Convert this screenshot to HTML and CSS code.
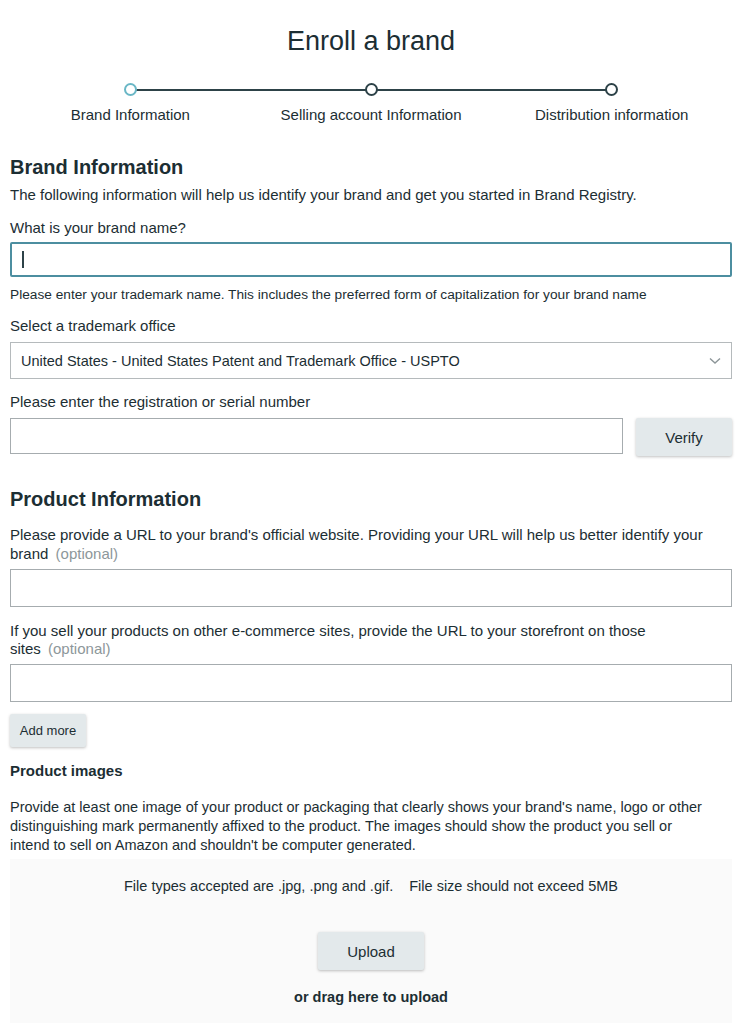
FILE: index.html
```html
<!DOCTYPE html>
<html lang="en">
<head>
    <meta charset="UTF-8">
    <meta name="viewport" content="width=device-width, initial-scale=1.0">
    <title>Enroll a brand</title>
    <link rel="stylesheet" href="styles.css">
</head>
<body>

    <div class="page">
        <h1 class="page-title">Enroll a brand</h1>

        <div class="stepper">
            <div class="step active">
                <span class="step-dot"></span>
                <span class="step-label">Brand Information</span>
            </div>
            <div class="step">
                <span class="step-dot"></span>
                <span class="step-label">Selling account Information</span>
            </div>
            <div class="step">
                <span class="step-dot"></span>
                <span class="step-label">Distribution information</span>
            </div>
        </div>

        <!-- Brand Information -->
        <h2 class="section-title">Brand Information</h2>
        <p class="intro">The following information will help us identify your brand and get you started in Brand Registry.</p>

        <label class="field-label first" for="brandName">What is your brand name?</label>
        <div class="text-input focused"><span class="caret"></span></div>
        <p class="hint">Please enter your trademark name. This includes the preferred form of capitalization for your brand name</p>

        <label class="field-label">Select a trademark office</label>
        <div class="select-box">
            <span>United States - United States Patent and Trademark Office - USPTO</span>
            <svg class="chevron" width="12" height="8" viewBox="0 0 12 8"><path d="M1 1.5 L6 6 L11 1.5" fill="none" stroke="#8c9598" stroke-width="1.4"/></svg>
        </div>

        <label class="field-label">Please enter the registration or serial number</label>
        <div class="verify-row">
            <div class="text-input"></div>
            <button class="btn btn-verify">Verify</button>
        </div>

        <!-- Product Information -->
        <h2 class="section-title product-title">Product Information</h2>

        <p class="field-label wrap">Please provide a URL to your brand's official website. Providing your URL will help us better identify your brand <span class="optional">(optional)</span></p>
        <div class="text-input tall"></div>

        <p class="field-label wrap narrow">If you sell your products on other e-commerce sites, provide the URL to your storefront on those sites <span class="optional">(optional)</span></p>
        <div class="text-input tall"></div>

        <button class="btn btn-small">Add more</button>

        <h3 class="sub-title">Product images</h3>
        <p class="images-text">Provide at least one image of your product or packaging that clearly shows your brand's name, logo or other distinguishing mark permanently affixed to the product. The images should show the product you sell or<br>intend to sell on Amazon and shouldn't be computer generated.</p>

        <div class="upload-area">
            <p class="file-types">File types accepted are .jpg, .png and .gif.<span class="gap"></span>File size should not exceed 5MB</p>
            <button class="btn btn-upload">Upload</button>
            <p class="drag-text">or drag here to upload</p>
        </div>
    </div>

</body>
</html>
```

FILE: styles.css
```css
body {
    margin: 0;
    background-color: #fff;
    font-family: "Liberation Sans", Arial, sans-serif;
    color: #1c2e33;
}

.page {
    padding: 0 10px 0 10px;
}

/* Title + stepper */
.page-title {
    margin: 0;
    padding-top: 25px;
    font-size: 27px;
    font-weight: normal;
    text-align: center;
    line-height: 32px;
}

.stepper {
    display: flex;
    justify-content: space-between;
    margin: 26px 0 0 0;
}

.step {
    position: relative;
    width: 241px;
    display: flex;
    flex-direction: column;
    align-items: center;
}

.step-dot {
    width: 9px;
    height: 9px;
    border: 2px solid #2d4248;
    border-radius: 50%;
    background-color: #fff;
    z-index: 1;
}

.step.active .step-dot {
    border-color: #6ab7c6;
}

/* connecting line between dots */
.step + .step::before {
    content: "";
    position: absolute;
    top: 6px;
    right: 50%;
    width: 241px;
    height: 2px;
    background-color: #2d4248;
}

.step-label {
    margin-top: 10px;
    font-size: 15px;
}

/* Sections */
.section-title {
    margin: 31px 0 0 0;
    font-size: 20px;
    font-weight: bold;
    line-height: 26px;
}

.product-title {
    margin-top: 30px;
}

.intro {
    margin: 5px 0 0 0;
    font-size: 15px;
    line-height: 20px;
}

.field-label {
    display: block;
    margin: 13px 0 7px 0;
    font-size: 15px;
    line-height: 19px;
}

.field-label.first {
    margin-bottom: 5px;
}

.field-label.wrap {
    margin: 13px 0 6px 0;
    max-width: 700px;
}

.field-label.narrow {
    max-width: 645px;
    margin: 15px 0 6px 0;
    line-height: 18px;
}

.optional {
    color: #8d979a;
    margin-left: 3px;
}

.text-input {
    box-sizing: border-box;
    height: 36px;
    border: 1px solid #a6acaf;
    background-color: #fff;
    display: flex;
    align-items: center;
    padding-left: 10px;
}

.text-input.tall {
    height: 38px;
}

.text-input.focused {
    height: 35px;
    border: 2px solid #4c8ea0;
    border-radius: 2px;
}

.caret {
    width: 2px;
    height: 17px;
    background-color: #2d4248;
}

.hint {
    margin: 9px 0 0 0;
    font-size: 13.7px;
    line-height: 17px;
}

.select-box {
    box-sizing: border-box;
    height: 37px;
    border: 1px solid #b5babc;
    display: flex;
    align-items: center;
    justify-content: space-between;
    padding: 0 10px 0 10px;
    font-size: 14.5px;
}

.verify-row {
    display: flex;
    gap: 13px;
}

.verify-row .text-input {
    flex: 1;
}

/* Buttons */
.btn {
    font-family: inherit;
    color: #1c2e33;
    background-color: #e3e9eb;
    border: none;
    border-radius: 2px;
    box-shadow: 0px 1px 3px rgba(0, 0, 0, 0.25);
    cursor: pointer;
}

.btn-verify {
    width: 96px;
    height: 38px;
    font-size: 15px;
}

.btn-small {
    margin-top: 12px;
    width: 76px;
    height: 33px;
    font-size: 13px;
}

.btn-upload {
    width: 106px;
    height: 38px;
    font-size: 15px;
}

.sub-title {
    margin: 14px 0 0 0;
    font-size: 15px;
    font-weight: bold;
    line-height: 20px;
}

.images-text {
    margin: 17px 0 0 0;
    font-size: 14.5px;
    line-height: 19px;
}

/* Upload area */
.upload-area {
    margin-top: 4px;
    background-color: #fafafa;
    display: flex;
    flex-direction: column;
    align-items: center;
    padding: 18px 0 18px 0;
}

.file-types {
    margin: 0 0 37px 0;
    font-size: 14.5px;
    line-height: 18px;
}

.gap {
    display: inline-block;
    width: 16px;
}

.drag-text {
    margin: 19px 0 0 0;
    font-size: 14.5px;
    font-weight: bold;
}
```
